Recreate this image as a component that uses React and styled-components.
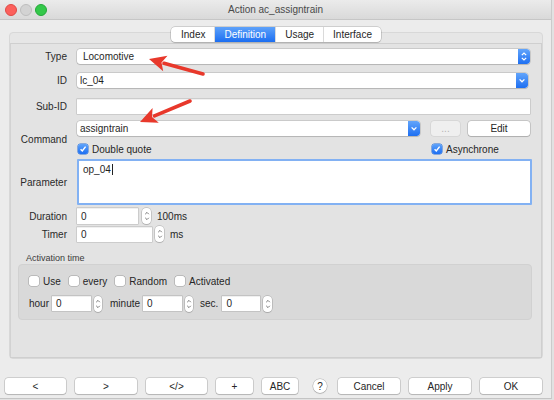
import React from "react";
import styled, { createGlobalStyle } from "styled-components";

const GlobalStyle = createGlobalStyle`
  html, body { margin: 0; padding: 0; background: #e2e2e2; }
  body {
    font-family: "Liberation Sans", Arial, sans-serif;
    font-size: 10px;
    color: #262626;
  }
  * { box-sizing: border-box; }
`;

const Window = styled.div`
  position: relative;
  width: 552px;
  height: 399px;
  background: #ececec;
  border-right: 1px solid #cbcbcb;
  border-bottom: 1px solid #c4c4c4;
  overflow: hidden;
`;

const TitleBar = styled.div`
  display: grid;
  grid-template-columns: 1fr auto 1fr;
  align-items: center;
  height: 20px;
  padding: 0 5px;
  background: linear-gradient(#ebebeb, #d9d9d9);
  border-bottom: 1px solid #c6c6c6;
`;

const Lights = styled.div`
  display: flex;
  gap: 3px;
`;

const Light = styled.span`
  width: 12px;
  height: 12px;
  border-radius: 50%;
  background: ${(p) => p.$fill};
  border: 0.5px solid ${(p) => p.$edge};
`;

const Title = styled.div`
  font-size: 10px;
  color: #4a4a4a;
`;

const Body = styled.div`
  padding: 7px 8px 0 5px;
`;

const TabBar = styled.div`
  position: relative;
  z-index: 1;
  display: flex;
  justify-content: center;
  padding-left: 4px;
`;

const Segmented = styled.div`
  display: flex;
  height: 15px;
  background: #fff;
  border-radius: 4px;
  box-shadow: 0 0 0 0.5px rgba(0, 0, 0, 0.25), 0 1px 1px rgba(0, 0, 0, 0.12);
  overflow: hidden;
`;

const Tab = styled.div`
  display: flex;
  align-items: center;
  padding: 0 9px;
  color: ${(p) => (p.$active ? "#fff" : "#262626")};
  background: ${(p) =>
    p.$active ? "linear-gradient(#5ea2fa, #1c6ef1)" : "transparent"};
  border-left: 1px solid ${(p) => (p.$first ? "transparent" : "#dadada")};
`;

const Pane = styled.div`
  display: flex;
  flex-direction: column;
  height: 327px;
  margin: -10px 0 0 4px;
  padding-top: 10px;
  background: #e6e6e6;
  border: 1px solid #d8d8d8;
  border-radius: 4px;
`;

const Content = styled.div`
  flex: 1;
  padding: 5px 11px 0 0;
  background: #e3e3e3;
  border: 1px solid #cfcfcf;
  border-left-color: #d2d2d2;
`;

const Row = styled.div`
  display: flex;
  align-items: center;
  margin-top: ${(p) => p.$top || 0}px;
  margin-right: ${(p) => p.$right || 0}px;
`;

const Label = styled.div`
  width: 56px;
  margin-right: 10px;
  padding-top: ${(p) => p.$shift || 0}px;
  flex-shrink: 0;
  text-align: right;
  color: #2a2a2a;
`;

const Column = styled.div`
  flex: 1;
  display: flex;
  flex-direction: column;
`;

const Combo = styled.div`
  flex: 1;
  display: flex;
  align-items: center;
  height: 15px;
  background: #fff;
  border-radius: 3px;
  box-shadow: 0 0 0 0.5px rgba(0, 0, 0, 0.22), 0 1px 1px rgba(0, 0, 0, 0.1);
  overflow: hidden;
`;

const ComboText = styled.span`
  flex: 1;
  padding-left: ${(p) => p.$pad || 3}px;
  color: #1f1f1f;
`;

const ComboArrow = styled.div`
  width: 12px;
  height: 100%;
  display: flex;
  align-items: center;
  justify-content: center;
  background: linear-gradient(#62a5fb, #1e6ff2);
  border-radius: 0 3px 3px 0;
`;

const Field = styled.div`
  flex: ${(p) => (p.$width ? "none" : 1)};
  width: ${(p) => (p.$width ? `${p.$width}px` : "auto")};
  height: ${(p) => p.$h || 15}px;
  margin-left: ${(p) => p.$left || 0}px;
  display: flex;
  align-items: center;
  padding-left: 4px;
  background: #fff;
  box-shadow: 0 0 0 0.5px rgba(0, 0, 0, 0.2), inset 0 1px 0 rgba(0, 0, 0, 0.06);
  color: #1f1f1f;
`;

const TextArea = styled.div`
  flex: 1;
  height: 46px;
  margin-right: -2px;
  padding: 3px 4px;
  background: #fff;
  border: 2px solid #82b1f3;
  border-radius: 1px;
  color: #1f1f1f;
  line-height: 12px;
`;

const Caret = styled.span`
  display: inline-block;
  width: 1px;
  height: 11px;
  margin-left: 1px;
  vertical-align: -2px;
  background: #222;
`;

const PushButton = styled.div`
  flex: none;
  width: ${(p) => p.$w}px;
  height: ${(p) => p.$h || 16}px;
  margin-left: ${(p) => p.$left || 0}px;
  display: flex;
  align-items: center;
  justify-content: center;
  background: ${(p) => (p.$disabled ? "#efefef" : "#fff")};
  color: ${(p) => (p.$disabled ? "#b3b3b3" : "#262626")};
  border-radius: 3px;
  box-shadow: ${(p) =>
    p.$disabled
      ? "0 0 0 0.5px rgba(0,0,0,0.1)"
      : "0 0 0 0.5px rgba(0,0,0,0.25), 0 1px 1px rgba(0,0,0,0.12)"};
`;

const HelpButton = styled.div`
  width: 14px;
  height: 14px;
  margin: 0 2px 0 6px;
  border-radius: 50%;
  display: flex;
  align-items: center;
  justify-content: center;
  background: #fff;
  box-shadow: 0 0 0 0.5px rgba(0, 0, 0, 0.25), 0 1px 1px rgba(0, 0, 0, 0.12);
  font-size: 10px;
`;

const CheckLine = styled.div`
  display: flex;
  align-items: center;
  height: 10px;
  margin-top: 8px;
`;

const CheckCell = styled.div`
  flex: ${(p) => (p.$width ? "none" : 1)};
  width: ${(p) => (p.$width ? `${p.$width}px` : "auto")};
  margin-left: ${(p) => p.$left || 0}px;
  display: flex;
  align-items: center;
`;

const Check = styled.label`
  display: flex;
  align-items: center;
  gap: 4px;
  margin-left: ${(p) => p.$left || 0}px;
  color: #262626;
`;

const Box = styled.span`
  width: 10px;
  height: 10px;
  border-radius: 2.5px;
  display: flex;
  align-items: center;
  justify-content: center;
  background: ${(p) => (p.$on ? "linear-gradient(#5fa3fa, #1e6ff2)" : "#fff")};
  box-shadow: ${(p) =>
    p.$on ? "0 0 0 0.5px #2a6fd6" : "0 0 0 0.5px rgba(0,0,0,0.28)"};
`;

const Stepper = styled.div`
  flex: none;
  width: ${(p) => p.$w || 9}px;
  height: 16px;
  margin-left: ${(p) => p.$left || 3}px;
  border-radius: 4px;
  display: flex;
  align-items: center;
  justify-content: center;
  background: #fff;
  box-shadow: 0 0 0 0.5px rgba(0, 0, 0, 0.25), 0 1px 1px rgba(0, 0, 0, 0.1);
`;

const Unit = styled.span`
  margin-left: ${(p) => p.$left || 6}px;
`;

const Caption = styled.div`
  margin-top: 11px;
  padding-left: 15px;
  height: 11px;
  line-height: 11px;
  font-size: 9px;
  color: #3a3a3a;
`;

const Group = styled.div`
  margin: 0 -2px 0 7px;
  padding: 10px 10px 8px;
  background: #d9d9d9;
  border: 1px solid #d1d1d1;
  border-radius: 4px;
`;

const GroupRow = styled.div`
  display: flex;
  align-items: center;
  height: ${(p) => p.$h}px;
  margin-top: ${(p) => p.$top || 0}px;
`;

const ButtonBar = styled.div`
  display: flex;
  align-items: center;
  gap: 9px;
  margin-top: 19px;
`;

const Overlay = styled.svg`
  position: absolute;
  top: 0;
  left: 0;
  pointer-events: none;
`;

const Chevron = ({ double }) => (
  <svg width="8" height="11" viewBox="0 0 8 11">
    {double ? (
      <>
        <path d="M1.8 4.2 L4 2 L6.2 4.2" fill="none" stroke="#fff" strokeWidth="1.2" />
        <path d="M1.8 6.8 L4 9 L6.2 6.8" fill="none" stroke="#fff" strokeWidth="1.2" />
      </>
    ) : (
      <path d="M1.6 4.4 L4 6.8 L6.4 4.4" fill="none" stroke="#fff" strokeWidth="1.3" />
    )}
  </svg>
);

const SpinIcon = () => (
  <svg width="6" height="12" viewBox="0 0 6 12">
    <path d="M1.2 4.2 L3 2.4 L4.8 4.2" fill="none" stroke="#6a6a6a" strokeWidth="0.9" />
    <path d="M1.2 7.8 L3 9.6 L4.8 7.8" fill="none" stroke="#6a6a6a" strokeWidth="0.9" />
  </svg>
);

const CheckBox = ({ on, children, left }) => (
  <Check $left={left}>
    <Box $on={on}>
      {on && (
        <svg width="8" height="8" viewBox="0 0 8 8">
          <path d="M1.6 4.2 L3.3 6 L6.6 1.6" fill="none" stroke="#fff" strokeWidth="1.4" />
        </svg>
      )}
    </Box>
    {children}
  </Check>
);

const Arrow = ({ tail, base, tip, left, right, notch }) => (
  <g fill="#e8382b">
    <line
      x1={tail[0]}
      y1={tail[1]}
      x2={base[0]}
      y2={base[1]}
      stroke="#e8382b"
      strokeWidth="3.6"
      strokeLinecap="round"
    />
    <polygon points={`${tip} ${left} ${notch} ${right}`} />
  </g>
);

export default function App() {
  return (
    <>
      <GlobalStyle />
      <Window>
        <TitleBar>
          <Lights>
            <Light $fill="#fc605c" $edge="#de4a46" />
            <Light $fill="#d3d3d3" $edge="#bebebe" />
            <Light $fill="#34c84a" $edge="#25a83a" />
          </Lights>
          <Title>Action ac_assigntrain</Title>
          <div />
        </TitleBar>
        <Body>
          <TabBar>
            <Segmented>
              <Tab $first>Index</Tab>
              <Tab $active>Definition</Tab>
              <Tab>Usage</Tab>
              <Tab>Interface</Tab>
            </Segmented>
          </TabBar>
          <Pane>
            <Content>
              <Row>
                <Label>Type</Label>
                <Combo>
                  <ComboText $pad={6}>Locomotive</ComboText>
                  <ComboArrow>
                    <Chevron double />
                  </ComboArrow>
                </Combo>
              </Row>
              <Row $top={9} $right={2}>
                <Label>ID</Label>
                <Combo>
                  <ComboText>lc_04</ComboText>
                  <ComboArrow>
                    <Chevron />
                  </ComboArrow>
                </Combo>
              </Row>
              <Row $top={11}>
                <Label>Sub-ID</Label>
                <Field />
              </Row>
              <Row $top={7}>
                <Label $shift={3}>Command</Label>
                <Column>
                  <Row>
                    <Combo>
                      <ComboText>assigntrain</ComboText>
                      <ComboArrow>
                        <Chevron />
                      </ComboArrow>
                    </Combo>
                    <PushButton $w={29} $h={15} $left={11} $disabled>
                      ...
                    </PushButton>
                    <PushButton $w={62} $h={15} $left={8}>
                      Edit
                    </PushButton>
                  </Row>
                  <CheckLine>
                    <CheckCell>
                      <CheckBox on left={1}>
                        Double quote
                      </CheckBox>
                    </CheckCell>
                    <CheckCell $width={99} $left={11}>
                      <CheckBox on left={1}>
                        Asynchrone
                      </CheckBox>
                    </CheckCell>
                  </CheckLine>
                </Column>
              </Row>
              <Row $top={5}>
                <Label>Parameter</Label>
                <TextArea>
                  op_04
                  <Caret />
                </TextArea>
              </Row>
              <Row $top={3}>
                <Label>Duration</Label>
                <Field $width={61} $h={16}>
                  0
                </Field>
                <Stepper $left={4}>
                  <SpinIcon />
                </Stepper>
                <Unit>100ms</Unit>
              </Row>
              <Row $top={2}>
                <Label>Timer</Label>
                <Field $width={75}>0</Field>
                <Stepper>
                  <SpinIcon />
                </Stepper>
                <Unit>ms</Unit>
              </Row>
              <Caption>Activation time</Caption>
              <Group>
                <GroupRow $h={12}>
                  <CheckBox>Use</CheckBox>
                  <CheckBox left={8}>every</CheckBox>
                  <CheckBox left={8}>Random</CheckBox>
                  <CheckBox left={8}>Activated</CheckBox>
                </GroupRow>
                <GroupRow $h={15} $top={9}>
                  <span>hour</span>
                  <Field $width={39} $left={3}>
                    0
                  </Field>
                  <Stepper $w={8}>
                    <SpinIcon />
                  </Stepper>
                  <Unit $left={8}>minute</Unit>
                  <Field $width={39} $left={3}>
                    0
                  </Field>
                  <Stepper $w={8}>
                    <SpinIcon />
                  </Stepper>
                  <Unit $left={7}>sec.</Unit>
                  <Field $width={38} $left={4}>
                    0
                  </Field>
                  <Stepper $w={9}>
                    <SpinIcon />
                  </Stepper>
                </GroupRow>
              </Group>
            </Content>
          </Pane>
          <ButtonBar>
            <PushButton $w={61}>&lt;</PushButton>
            <PushButton $w={62}>&gt;</PushButton>
            <PushButton $w={61}>&lt;/&gt;</PushButton>
            <PushButton $w={37}>+</PushButton>
            <PushButton $w={36}>ABC</PushButton>
            <HelpButton>?</HelpButton>
            <PushButton $w={62}>Cancel</PushButton>
            <PushButton $w={62}>Apply</PushButton>
            <PushButton $w={62}>OK</PushButton>
          </ButtonBar>
        </Body>
        <Overlay width="552" height="399">
          <Arrow
            tail={[203, 74]}
            base={[164, 63.3]}
            tip="149,59"
            left="167.5,55.8"
            right="163.2,71.3"
            notch="161.5,62.5"
          />
          <Arrow
            tail={[190, 101]}
            base={[154.5, 115.9]}
            tip="140,122"
            left="158.8,122.8"
            right="152.6,108"
            notch="152,117"
          />
        </Overlay>
      </Window>
    </>
  );
}
